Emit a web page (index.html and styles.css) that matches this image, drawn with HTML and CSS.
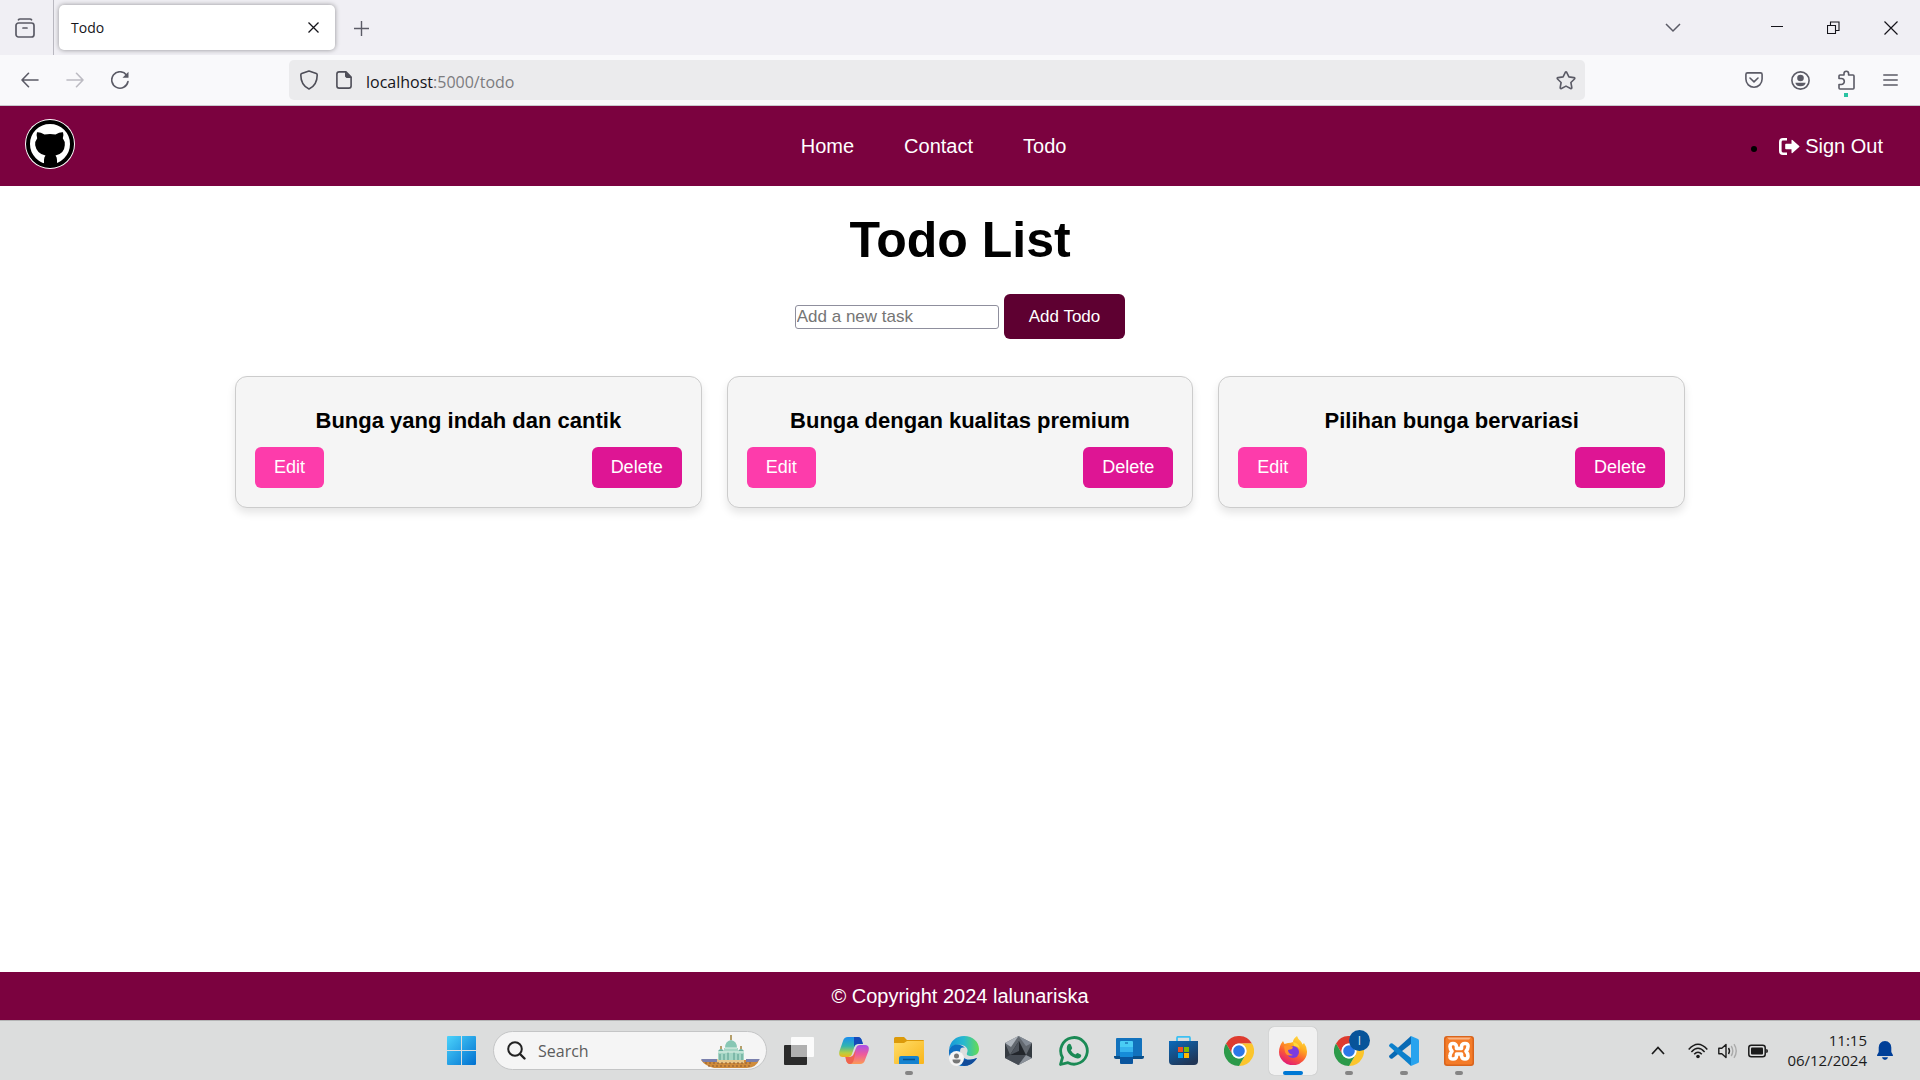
FILE: index.html
```html
<!DOCTYPE html>
<html lang="id">
<head>
<meta charset="utf-8">
<title>Todo</title>
<link rel="stylesheet" href="styles.css">
</head>
<body>
<div class="tabstrip">
  <button class="icon-btn view-btn" aria-label="Firefox View">
    <svg width="20" height="20" viewBox="0 0 20 20" fill="none" stroke="#5b5b66" stroke-width="1.7" stroke-linecap="round"><rect x="1" y="5" width="18" height="14" rx="2.5"/><path d="M3.5 1.8Q4 1 5 1h10q1 0 1.500.8M8 10h4"/></svg>
  </button>
  <div class="tab">
    <span class="tab-title">Todo</span>
    <button class="icon-btn" aria-label="Close tab"><svg width="11" height="11" viewBox="0 0 11 11" stroke="#15141a" stroke-width="1.3"><path d="M.5.5l10 10M10.500.5l-10 10"/></svg></button>
  </div>
  <button class="icon-btn new-tab" aria-label="New tab"><svg width="15" height="15" viewBox="0 0 15 15" stroke="#5b5b66" stroke-width="1.4"><path d="M7.500 0v15M0 7.500h15"/></svg></button>
  <div class="window-controls">
    <button class="icon-btn" aria-label="List all tabs"><svg width="16" height="10" viewBox="0 0 16 10" fill="none" stroke="#5b5b66" stroke-width="1.5"><path d="M1 1l7 7 7-7"/></svg></button>
    <button class="icon-btn minimize" aria-label="Minimize"><svg width="12" height="14" viewBox="0 0 12 14" stroke="#15141a"><path d="M0 5.500h12"/></svg></button>
    <button class="icon-btn" aria-label="Restore"><svg width="13" height="14" viewBox="0 0 13 14" fill="none" stroke="#15141a" stroke-width="1.1"><path d="M.500 4.500h8v8h-8zM3.500 4.500v-3.500h8.500v8.500H8.500"/></svg></button>
    <button class="icon-btn" aria-label="Close"><svg width="14" height="14" viewBox="0 0 14 14" stroke="#15141a" stroke-width="1.2"><path d="M.500.500l13 13M13.500.500l-13 13"/></svg></button>
  </div>
</div>

<div class="toolbar">
  <div class="nav-buttons">
    <button class="icon-btn" aria-label="Back"><svg width="18" height="16" viewBox="0 0 18 16" fill="none" stroke="#5b5b66" stroke-width="1.6" stroke-linecap="round" stroke-linejoin="round"><path d="M17 8H1M7.500 1.300L1 8l6.500 6.700"/></svg></button>
    <button class="icon-btn" aria-label="Forward"><svg width="18" height="16" viewBox="0 0 18 16" fill="none" stroke="#bcbbc2" stroke-width="1.6" stroke-linecap="round" stroke-linejoin="round"><path d="M1 8h16M10.500 1.300L17 8l-6.500 6.700"/></svg></button>
    <button class="icon-btn" aria-label="Reload"><svg width="18" height="18" viewBox="0 0 18 18" fill="none" stroke="#5b5b66" stroke-width="1.6" stroke-linecap="round"><path d="M17 10.500A8.200 8.200 0 1 1 15.500 4"/><path d="M17.500.800v6h-6z" fill="#5b5b66" stroke="none"/></svg></button>
  </div>
  <div class="urlbar">
    <svg width="18" height="20" viewBox="0 0 18 20" fill="none" stroke="#4e4e58" stroke-width="1.6" stroke-linejoin="round"><path d="M9 1l7.300 2.600q.9.400.9 1.400C17.200 12 14.500 16.500 9 19 3.500 16.500.8 12 .8 5q0-1 .9-1.400z"/></svg>
    <svg width="16" height="18" viewBox="0 0 16 18" fill="none" stroke="#4e4e58" stroke-width="1.600" stroke-linejoin="round"><path d="M10 .9H3.200Q.9.900.9 3v12q0 2.100 2.300 2.100h9.600q2.300 0 2.300-2.100V6z"/><path d="M9.500.9L15.100 6.500H11Q9.500 6.500 9.500 5z" fill="#4e4e58" stroke-width="1"/></svg>
    <span class="url"><span class="host">localhost</span>:5000/todo</span>
    <svg class="star" width="20" height="19" viewBox="0 0 20 19" fill="none" stroke="#5b5b66" stroke-width="1.600" stroke-linejoin="round"><path d="M9.300 1.300q.7-1 1.400 0l2.200 4.600 5 .7q1.500.3.600 1.400l-3.600 3.500.9 5q.1 1.500-1.200 1L10 15.100l-4.600 2.400q-1.300.5-1.200-1l.9-5L1.500 8Q.6 6.900 2.100 6.600l5-.7z"/></svg>
  </div>
  <div class="tool-icons">
    <button class="icon-btn" aria-label="Save to Pocket"><svg width="18" height="16" viewBox="0 0 18 16" fill="none" stroke="#5b5b66" stroke-width="1.600" stroke-linecap="round" stroke-linejoin="round"><path d="M2.500.900h13q1.600 0 1.600 1.600v4.600a8.100 8.100 0 0 1-16.200 0V2.500Q.9.900 2.500.900zM5 6l4 3.800L13 6"/></svg></button>
    <button class="icon-btn" aria-label="Account"><svg width="19" height="19" viewBox="0 0 19 19" fill="none" stroke="#5b5b66" stroke-width="1.600"><circle cx="9.500" cy="9.500" r="8.600"/><circle cx="9.500" cy="7" r="3.300" fill="#5b5b66" stroke="none"/><path d="M4.300 11.700h10.400q-.8 3.600-5.200 3.600t-5.200-3.600z" fill="#5b5b66" stroke="none"/></svg></button>
    <button class="icon-btn ext" aria-label="Extensions"><svg width="17" height="20" viewBox="0 0 17 20" fill="none" stroke="#5b5b66" stroke-width="1.600" stroke-linejoin="round"><path d="M1 8.500V6q0-1 1-1h4V3.500a2.300 2.300 0 0 1 4.600 0V5H15q1 0 1 1v12q0 1-1 1H2q-1 0-1-1v-3.500h2.300a2.700 2.700 0 0 0 0-6z"/></svg></button>
    <button class="icon-btn" aria-label="Menu"><svg width="15" height="14" viewBox="0 0 15 14" stroke="#5b5b66" stroke-width="1.500" stroke-linecap="round"><path d="M.8 2h13.400M.8 7h13.400M.8 12h13.400"/></svg></button>
  </div>
</div>

<header class="site-header">
  <a class="logo" href="#" aria-label="Logo">
    <svg width="50" height="50" viewBox="0 0 50 50"><circle cx="25" cy="25" r="25" fill="#fff"/><circle cx="25" cy="25" r="22" fill="none" stroke="#000" stroke-width="4"/><path d="M12 13.200q3-.4 7.500 2.200 5.500-1 11 0 4.500-2.600 7.500-2.200 1 3-.2 6 2.400 3 2 7-.5 8.500-9.300 10.300 1.500 1.500 1.500 4.500V48H19v-7q0-3 1.500-4.500-8.800-1.800-10.300-10.300-.4-4 2-7-1.200-3-.2-6z"/></svg>
  </a>
  <nav class="site-nav">
    <a href="#">Home</a>
    <a href="#">Contact</a>
    <a href="#">Todo</a>
  </nav>
  <ul class="account">
    <li><a href="#"><svg width="21" height="17" viewBox="0 0 21 17"><path d="M8 1.300H4Q1.300 1.300 1.300 4v9Q1.300 15.700 4 15.700h4" fill="none" stroke="#fff" stroke-width="2.600"/><path d="M7 5.700h5.500V2.400q0-1.200 1-.5l6.700 6q.7.600 0 1.200l-6.700 6q-1 .7-1-.5v-3.300H7q-.8 0-.8-.8v-4q0-.8.800-.8z" fill="#fff"/></svg>Sign Out</a></li>
  </ul>
</header>

<main class="content">
  <h1>Todo List</h1>
  <form class="add-form">
    <input type="text" placeholder="Add a new task" aria-label="New task">
    <button type="button">Add Todo</button>
  </form>
  <div class="cards">
    <article class="card"><h3>Bunga yang indah dan cantik</h3><div class="actions"><button class="edit">Edit</button><button class="delete">Delete</button></div></article>
    <article class="card"><h3>Bunga dengan kualitas premium</h3><div class="actions"><button class="edit">Edit</button><button class="delete">Delete</button></div></article>
    <article class="card"><h3>Pilihan bunga bervariasi</h3><div class="actions"><button class="edit">Edit</button><button class="delete">Delete</button></div></article>
  </div>
</main>

<footer class="site-footer">© Copyright 2024 lalunariska</footer>

<div class="taskbar">
  <div class="apps">
    <button class="app" aria-label="Start"><svg width="29" height="29" viewBox="0 0 29 29"><defs><linearGradient id="win" x1="0" y1="0" x2="29" y2="29" gradientUnits="userSpaceOnUse"><stop stop-color="#4cd3fb"/><stop offset="1" stop-color="#0070d0"/></linearGradient></defs><path d="M0 1q0-1 1-1h13v14H0zM15 0h13q1 0 1 1v13H15zM0 15h14v14H1q-1 0-1-1zM15 15h14v13q0 1-1 1H15z" fill="url(#win)"/></svg></button>
    <label class="search">
      <svg width="19" height="19" viewBox="0 0 19 19" fill="none" stroke="#222" stroke-width="2" stroke-linecap="round"><circle cx="8" cy="8" r="6.800"/><path d="M13 13l4.500 4.500" stroke-width="2.400"/></svg>
      <input type="text" placeholder="Search" aria-label="Search">
      <svg width="60" height="34" viewBox="0 0 60 34"><path d="M1 26h58q-2 7-12 8H14Q5 32 1 26z" fill="#cf8c3c"/><path d="M1 25h17v3H3zM46 25h14l-3 3H46z" fill="#7a80ad"/><path d="M17 25h27v4H17z" fill="#e8c88b"/><path d="M5 29h48M8 32h42" stroke="#8a5830" stroke-dasharray="2 2"/><path d="M18 17h6v-3h14v3h6v9H18z" fill="#a5d6c5"/><path d="M25 14q0-7 6-8 6 1 6 8z" fill="#87c7b4"/><path d="M18 17q3-4 6 0M38 17q3-4 6 0" fill="#68ae9d"/><path d="M20 20v6M24 20v6M28 18v8M34 18v8M38 20v6M42 20v6" stroke="#579c8d"/><path d="M18 18h26M25 14h12" stroke="#e1f1e8"/><path d="M31 1v5M21 12v3M41 12v3" stroke="#a0833e" stroke-width="1.500"/></svg>
    </label>
    <button class="app" aria-label="Task view"><svg width="30" height="28" viewBox="0 0 30 28"><rect y="8" width="23" height="20" rx="1" fill="#2b2b2b"/><rect x="7" width="23" height="20" rx="1" fill="#fff" opacity=".88"/><path d="M7 8h16v12H7z" fill="#b0b0b0"/></svg></button>
    <button class="app" aria-label="Copilot"><svg width="30" height="28" viewBox="0 0 30 28"><defs><linearGradient id="co1" x2="0" y2="1"><stop stop-color="#1a8cf0"/><stop offset=".45" stop-color="#31b4b0"/><stop offset=".8" stop-color="#b9cf3e"/><stop offset="1" stop-color="#efb21e"/></linearGradient><linearGradient id="co2" x2="0" y2="1"><stop stop-color="#a950e8"/><stop offset=".5" stop-color="#ee5b9b"/><stop offset="1" stop-color="#fb9a55"/></linearGradient></defs><path d="M9 0h10q3 0 4 4l1 3h-5q-3 0-4 4l-2 6q-1 3-4 3H4q-5 0-3.500-6L4 4q1-4 5-4z" fill="url(#co1)"/><path d="M15 0h4q3 0 4 4l1 3h-5q-3 0-4 3z" fill="#1648b8"/><path d="M21 27H11q-3 0-4-4l-1-3h4q4 0 5-4l2-5q1-3 4-3h5q5 0 3.500 6L26 23q-1 4-5 4z" fill="url(#co2)"/><path d="M7 20h4q3 0 4-3l2-4-2 9q-1 5-4 5-3 0-4-4z" fill="#ef634e"/></svg></button>
    <button class="app running" aria-label="File Explorer"><svg width="30" height="27" viewBox="0 0 30 27"><defs><linearGradient id="fold" x2="1" y2="1"><stop stop-color="#ffdc67"/><stop offset="1" stop-color="#f9b51a"/></linearGradient></defs><path d="M0 9V1.500Q0 0 1.500 0H10l3 3h16q1 0 1 1v5z" fill="#dc9a0a"/><path d="M0 6h10l3-2h17v22q0 1-1 1H1q-1 0-1-1z" fill="url(#fold)"/><path d="M5 27v-6q0-2 2-2h16q2 0 2 2v6z" fill="#1582cf"/><path d="M9 22.500h12" stroke="#07518d" stroke-width="1.500"/></svg></button>
    <button class="app" aria-label="Edge"><svg width="30" height="30" viewBox="0 0 30 30"><defs><linearGradient id="edge" x2="1"><stop stop-color="#1697d9"/><stop offset=".5" stop-color="#28b9cf"/><stop offset="1" stop-color="#66dc52"/></linearGradient></defs><path d="M0 14C1 5 7 0 15 0c9 0 15 6 15 13 0 5-4 7-8 7-3 0-5-1-4-3 2-4-1-7-5-8C7 8 2 10 0 14z" fill="url(#edge)"/><path d="M0 14C3 7 12 7 16 12c-5-2-6 3-4 7 3 5 10 6 16 3-3 5-8 8-13 8C6 30-1 23 0 14z" fill="#0e6fc2"/><path d="M9 15c0 9 8 11 19 7-3 5-8 8-13 8-5-2-7-8-6-15z" fill="#124c9a"/><circle cx="7.500" cy="22.500" r="7.500" fill="#f5f5f5"/><circle cx="7.500" cy="20" r="2.500" fill="#777"/><path d="M3.500 23.500h8q0 4-4 4t-4-4z" fill="#777"/></svg></button>
    <button class="app" aria-label="3D app"><svg width="27" height="29" viewBox="0 0 27 29"><path d="M13.500 0L27 7v15l-13.500 7L0 22V7z" fill="#62686f"/><path d="M13.500 0L0 7l6 4z" fill="#aeb4bb"/><path d="M13.500 0L27 7l-6 3z" fill="#838b95"/><path d="M0 7l6 14-6 1zM27 7v15l-7-1z" fill="#343a40"/><path d="M14 5l7 14H5z" fill="#22262b"/><path d="M5 19h16l-7.500 10L0 22z" fill="#464c54"/><path d="M14 5L5 19l9-4z" fill="#4d535b"/><path d="M21 19l6 3-13.500 7z" fill="#8c939b"/></svg></button>
    <button class="app" aria-label="WhatsApp"><svg width="30" height="30" viewBox="0 0 30 30"><path d="M1.500 28.500l2-7A13.300 13.300 0 1 1 9 26.700z" fill="none" stroke="#1b8a55" stroke-width="2.800" stroke-linejoin="round"/><path d="M9 8.500q1.500-1.500 2.800 0L13.200 12q0 1-1.400 2.300 1.500 3 4.500 4.300 1.600-1.700 2.400-1.600l3.300 1.700q.8 1-.6 2.700-2 1.700-5 .6Q10.500 20 8.300 15 7 11 9 8.500z" fill="#1b8a55"/></svg></button>
    <button class="app" aria-label="Phone Link"><svg width="30" height="26" viewBox="0 0 30 26"><path d="M2 1q0-1 1-1h24q1 0 1 1v18H2z" fill="#1272bd"/><path d="M0 18h30v1q0 2-2 2H2q-2 0-2-2z" fill="#0b4f88"/><path d="M6 4q0-1 1-1h11q1 0 1 1v9H6z" fill="#49ccf5"/><path d="M6 9h13v5H6z" fill="#36b3ee"/><path d="M6 14h13v5H6z" fill="#168bd8"/><path d="M6 19h13v6q0 1-1 1H7q-1 0-1-1z" fill="#0a559e"/><path d="M11 5h3" stroke="#0a559e"/></svg></button>
    <button class="app" aria-label="Microsoft Store"><svg width="29" height="29" viewBox="0 0 29 29"><defs><linearGradient id="store" x2=".6" y2="1"><stop stop-color="#0b6abb"/><stop offset="1" stop-color="#203657"/></linearGradient></defs><path d="M8 7V2q0-1.200 1.200-1.200h10.600Q21 .8 21 2v5" fill="none" stroke="#3ec0f2" stroke-width="1.800"/><path d="M0 5h29v20q0 4-4 4H4q-4 0-4-4z" fill="url(#store)"/><path d="M9 11h5v5H9z" fill="#f25022"/><path d="M15 11h5v5h-5z" fill="#7fba00"/><path d="M9 17h5v5H9z" fill="#00a4ef"/><path d="M15 17h5v5h-5z" fill="#ffb900"/></svg></button>
    <button class="app" aria-label="Chrome"><svg width="30" height="30" viewBox="0 0 30 30"><path d="M2 7.500a15 15 0 0 1 26 0H15a7.500 7.500 0 0 0-6.500 11.200z" fill="#de3b2f"/><path d="M28 7.500A15 15 0 0 1 15 30l6.500-11.200A7.500 7.500 0 0 0 15 7.500z" fill="#fbc52c"/><path d="M2 7.500L8.500 18.700a7.500 7.500 0 0 0 13 0L15 30A15 15 0 0 1 2 7.500z" fill="#2c9a4a"/><circle cx="15" cy="15" r="7.500" fill="#fff"/><circle cx="15" cy="15" r="5.800" fill="#2b77e8"/></svg></button>
    <button class="app running active" aria-label="Firefox"><svg width="28" height="29" viewBox="0 0 28 29"><defs><linearGradient id="fox" x1=".8" y1="0" x2=".3" y2="1"><stop stop-color="#ffe14a"/><stop offset=".35" stop-color="#ffad1f"/><stop offset=".65" stop-color="#fb5b35"/><stop offset="1" stop-color="#e0177b"/></linearGradient></defs><path d="M4 5l1.500 3L9 7q3 0 5-1 0-3 4-6 1 3 3.500 5 1.500 1.500 2 3.500L25 7q3 4 3 8.500A14 13.500 0 0 1 0 16Q0 10 4 5z" fill="url(#fox)"/><circle cx="14" cy="16" r="6" fill="#7b3be0"/><path d="M5 10q5-2 9 1l-1 2-4 1q0 4 5 5-6 2-8-3z" fill="#ff922d"/><path d="M14 6q6 1 7 7-2-3-6-3z" fill="#ffd83e"/></svg></button>
    <button class="app running" aria-label="Chrome profile"><svg width="30" height="30" viewBox="0 0 30 30"><path d="M2 7.500a15 15 0 0 1 26 0H15a7.500 7.500 0 0 0-6.500 11.200z" fill="#de3b2f"/><path d="M28 7.500A15 15 0 0 1 15 30l6.500-11.200A7.500 7.500 0 0 0 15 7.500z" fill="#fbc52c"/><path d="M2 7.500L8.500 18.700a7.500 7.500 0 0 0 13 0L15 30A15 15 0 0 1 2 7.500z" fill="#2c9a4a"/><circle cx="15" cy="15" r="7.500" fill="#fff"/><circle cx="15" cy="15" r="5.800" fill="#2b77e8"/></svg><span class="badge">I</span></button>
    <button class="app running" aria-label="VS Code"><svg width="30" height="30" viewBox="0 0 30 30"><path d="M22 0v8L3.500 22.500q-1 .5-2 0L.4 21.200q-.8-1 0-1.800z" fill="#0869b4"/><path d="M22 30v-8L3.500 7.500q-1-.5-2 0L.4 8.800q-.8 1 0 1.800z" fill="#0c80cc"/><path d="M22 0l7 3q1 .5 1 1.500v21q0 1-1 1.500l-7 3z" fill="#28a3ee"/></svg></button>
    <button class="app running" aria-label="XAMPP"><svg width="30" height="30" viewBox="0 0 30 30"><rect width="30" height="30" rx="3" fill="#d9641c"/><rect x="1.500" y="1.500" width="27" height="27" rx="2" fill="#f47b28"/><path d="M3 1.500h24l-2 2H5z" fill="#f9b585"/><path d="M6 10.500Q6 7.500 9 7.500T12.500 10.500V12.500H17.500V10.500Q17.500 7.500 21 7.500T24 10.500Q24 13 22 15.300 24 17.500 24 20 24 23 21 23T17.500 20V18H12.500V20Q12.500 23 9 23T6 20Q6 17.500 8 15.300 6 13 6 10.500z" fill="none" stroke="#fff" stroke-width="3.600" stroke-linejoin="round"/></svg></button>
  </div>
  <div class="tray">
    <svg class="tray-up" width="14" height="9" viewBox="0 0 14 9" fill="none" stroke="#1b1b1b" stroke-width="1.700"><path d="M1 8l6-6.500L13 8"/></svg>
    <svg width="20" height="16" viewBox="0 0 20 16" fill="none" stroke="#1b1b1b" stroke-width="1.500"><path d="M.7 6.500q9.300-10.500 18.600 0M3.400 9q6.600-7.500 13.200 0M6.200 11.300q3.800-4.200 7.600 0"/><circle cx="10" cy="13.500" r="1.800" fill="#1b1b1b" stroke="none"/></svg>
    <svg width="20" height="16" viewBox="0 0 20 16" fill="none" stroke="#1b1b1b" stroke-width="1.400" stroke-linejoin="round"><path d="M.8 5.200h3L8 1.500v13l-4.200-3.700h-3z"/><path d="M10.500 5q2 3 0 6"/><path d="M13.200 3q3.200 5 0 10M16 1.200q4.500 6.800 0 13.600" stroke="#aaa"/></svg>
    <svg width="20" height="14" viewBox="0 0 20 14"><rect x=".8" y="1.300" width="16.400" height="11.400" rx="2.500" fill="none" stroke="#1b1b1b" stroke-width="1.500"/><rect x="3" y="3.500" width="12" height="7" rx="1" fill="#1b1b1b"/><path d="M18.200 5q1.800 0 1.800 2t-1.800 2z" fill="#1b1b1b"/></svg>
    <div class="clock"><span>11:15</span><span>06/12/2024</span></div>
    <svg width="16" height="19" viewBox="0 0 16 19" fill="#003f98"><path d="M8 0q6 .5 6.300 6.500V11l1.600 3q.3 1-.8 1H.9q-1.100 0-.8-1l1.600-3V6.500Q2 .5 8 0zM5 16.300h6q-.5 2.700-3 2.700t-3-2.700z"/></svg>
  </div>
</div>
</body>
</html>
```

FILE: styles.css
```css
* { box-sizing: border-box; }

body {
  margin: 0;
  min-height: 100vh;
  display: flex;
  flex-direction: column;
  background: #fff;
  color: #000;
  font-family: "Liberation Sans", Arial, sans-serif;
  font-size: 20px;
}

button { font-family: inherit; border: 0; cursor: pointer; }
svg { display: block; flex: none; }
a { color: #fff; text-decoration: none; }

.icon-btn { padding: 0; background: none; display: flex; }

/* browser frame */
.tabstrip {
  height: 55px;
  display: flex;
  align-items: center;
  background: #f0eff4;
  font-family: "Open Sans", "Noto Sans", sans-serif;
}
.view-btn {
  align-self: stretch;
  align-items: center;
  width: 54px;
  padding-left: 15px;
  border-right: 1px solid #b9b8c0;
}
.tab {
  width: 276px;
  height: 45px;
  margin-left: 5px;
  padding: 0 16px 0 12px;
  display: flex;
  align-items: center;
  justify-content: space-between;
  background: #fff;
  border-radius: 5px;
  box-shadow: 0 0 5px rgba(0, 0, 0, .4);
}
.tab-title { font-size: 14px; color: #15141a; }
.new-tab { margin-left: 19px; padding-top: 2px; }
.window-controls {
  margin-left: auto;
  padding-right: 22px;
  display: flex;
  align-items: center;
  gap: 44px;
}
.minimize { margin-left: 46px; }

.toolbar {
  height: 51px;
  padding: 0 22px 0 21px;
  display: flex;
  align-items: center;
  gap: 160px;
  background: #f9f9fb;
  border-bottom: 1px solid #c9c8cd;
  font-family: "Open Sans", "Noto Sans", sans-serif;
}
.nav-buttons { display: flex; align-items: center; gap: 27px; }
.urlbar {
  flex: 1;
  height: 40px;
  padding: 0 9px 0 11px;
  display: flex;
  align-items: center;
  background: #ebebed;
  border-radius: 5px;
  gap: 18px;
}
.url { font-size: 16px; line-height: 24px; color: #7c7c80; margin-left: -4px; padding-top: 3px; }
.host { color: #15141a; }
.star { margin-left: auto; }
.tool-icons { display: flex; align-items: center; gap: 28px; }
.ext { position: relative; }
.ext::after {
  content: "";
  position: absolute;
  left: 6px;
  top: 23px;
  width: 4px;
  height: 4px;
  background: #2ac3a2;
}

/* site header */
.site-header {
  height: 80px;
  padding: 0 25px;
  display: flex;
  align-items: center;
  justify-content: space-between;
  background: #7b023f;
}
.logo { padding-bottom: 4px; }
.site-nav { display: flex; gap: 50px; margin-left: 22px; }
.account { margin: 0; padding: 0 12px 0 0; list-style: disc; }
.account a { display: flex; align-items: center; gap: 5px; padding-left: 9px; }

/* todo page */
.content { flex: 1; padding: 24px 0; }
h1 { margin: 0; font-size: 50px; line-height: 60px; text-align: center; }
.add-form {
  margin: 24px 0 37px;
  display: flex;
  justify-content: center;
  align-items: center;
  gap: 5px;
}
.add-form input {
  width: 204px;
  height: 24px;
  padding: 1px;
  border: 1px solid #8f8f9d;
  border-radius: 3px;
  font: 17px "Liberation Sans", Arial, sans-serif;
}
.add-form input::placeholder { color: #757575; }
.add-form button {
  height: 45px;
  padding: 0 25px;
  border-radius: 6px;
  background: #5e0031;
  color: #fff;
  font-size: 17px;
}
.cards {
  max-width: 1450px;
  margin: 0 auto;
  display: grid;
  grid-template-columns: repeat(3, 1fr);
  gap: 25px;
}
.card {
  padding: 30px 19px 19px;
  background: #f5f5f5;
  border: 1px solid #ccc;
  border-radius: 12px;
  box-shadow: 0 5px 8px rgba(0, 0, 0, .1);
}
.card h3 { margin: 0 0 12px; font-size: 22px; line-height: 28px; text-align: center; }
.actions { display: flex; justify-content: space-between; }
.actions button {
  height: 41px;
  padding: 0 19px;
  border-radius: 6px;
  color: #fff;
  font-size: 18px;
}
.edit { background: #fd3cab; }
.delete { background: #de1594; }

.site-footer {
  height: 48px;
  line-height: 48px;
  text-align: center;
  color: #fff;
  background: #7b023f;
}

/* taskbar */
.taskbar {
  height: 60px;
  display: grid;
  grid-template-columns: 1fr auto 1fr;
  align-items: center;
  background: #dcdddd;
  border-top: 1px solid #b5b5b6;
  font-family: "Open Sans", "Noto Sans", sans-serif;
}
.apps { grid-column: 2; display: flex; align-items: center; }
.app {
  position: relative;
  width: 55px;
  height: 48px;
  padding: 0;
  display: flex;
  align-items: center;
  justify-content: center;
  background: none;
}
.running::after {
  content: "";
  position: absolute;
  bottom: 0;
  left: 50%;
  width: 8px;
  height: 4px;
  margin-left: -4px;
  border-radius: 2px;
  background: #858585;
}
.active { width: 48px; margin: 0 4px 0 3px; background: #f1f1f1; border-radius: 5px; box-shadow: 0 0 1px rgba(0, 0, 0, .3); }
.active::after { width: 20px; margin-left: -10px; background: #0078d4; }
.badge {
  position: absolute;
  top: 3px;
  right: 6px;
  width: 21px;
  height: 21px;
  border-radius: 50%;
  background: #07549a;
  color: #d8e6f2;
  font-size: 12px;
  line-height: 21px;
}
.search {
  width: 274px;
  height: 39px;
  margin: 0 4px;
  padding: 0 6px 0 13px;
  display: flex;
  align-items: center;
  gap: 12px;
  background: #f5f5f5;
  border: 1px solid #c4c5c6;
  border-radius: 20px;
}
.search input {
  flex: 1;
  min-width: 0;
  padding: 0;
  border: 0;
  background: none;
  font: 16px "Open Sans", "Noto Sans", sans-serif;
}
.search input::placeholder { color: #5c5c5c; }
.tray {
  display: flex;
  justify-content: flex-end;
  align-items: center;
  gap: 10px;
  padding-right: 27px;
}
.tray-up { margin-right: 13px; }
.clock {
  width: 89px;
  padding-bottom: 2px;
  display: flex;
  flex-direction: column;
  text-align: right;
  font-size: 15px;
  line-height: 20px;
  color: #1b1b1b;
}
```
